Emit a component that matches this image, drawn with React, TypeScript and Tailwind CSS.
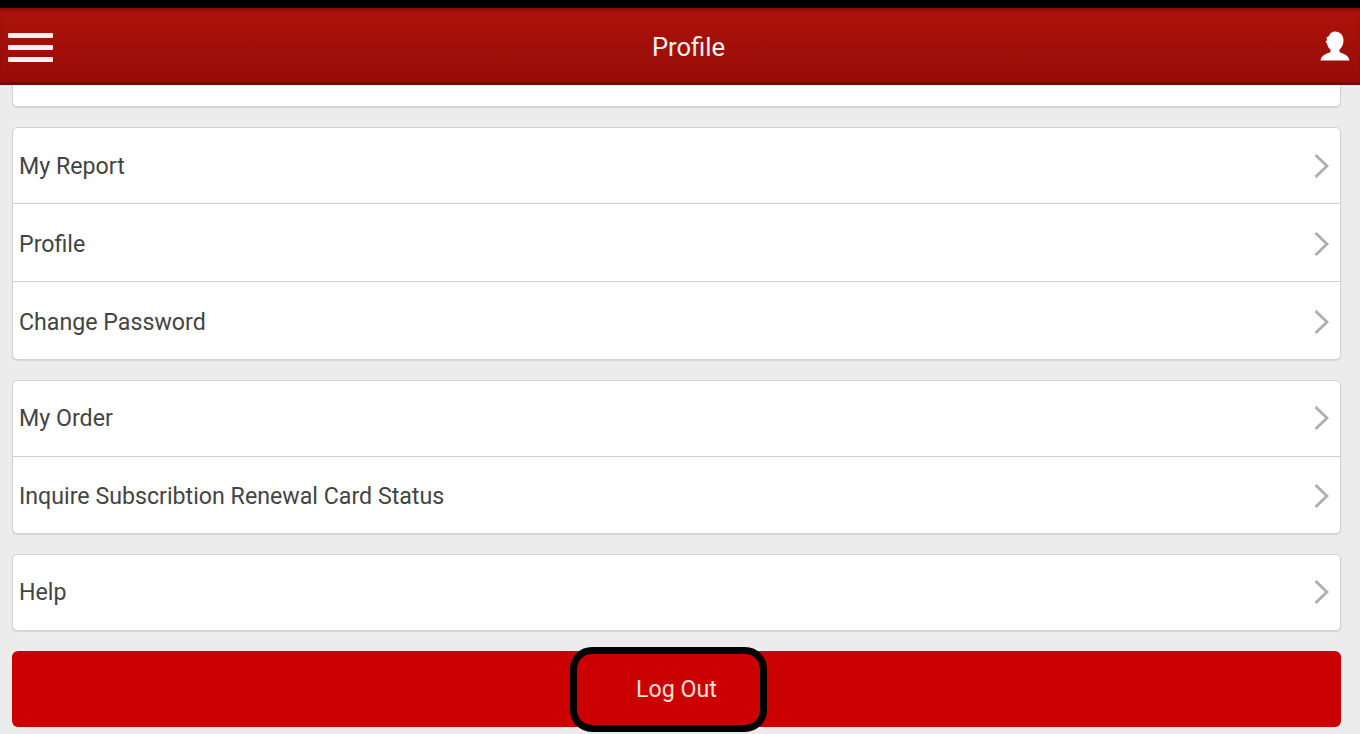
import React from 'react';

const groups = [
  [
    { label: 'My Report', height: 'h-[76px] pt-[2px]' },
    { label: 'Profile', height: 'h-[78px] pt-[4px]' },
    { label: 'Change Password', height: 'h-[77px] pt-[4px]' },
  ],
  [
    { label: 'My Order', height: 'h-[76px]' },
    { label: 'Inquire Subscribtion Renewal Card Status', height: 'h-[76px] pt-[3px]' },
  ],
  [{ label: 'Help', height: 'h-[75px]' }],
];

const Chevron = () => (
  <svg className="w-[15px] h-[24px] -mt-[2px] shrink-0" viewBox="0 0 15 24" fill="none" stroke="#adadad" strokeWidth="2.8">
    <path d="M1.5 1 L13 12 L1.5 23" />
  </svg>
);

const UserIcon = () => (
  <svg className="w-[30px] h-[30px] -mt-[4px]" viewBox="0 0 30 30" fill="#ffffff">
    <path d="M15 0.5 C20 0.5 23.5 4 23.5 9.5 C23.5 13.5 21.5 17 19.5 18.5 L19.5 21 C23 23 28.5 23.5 29.5 29.5 L0.5 29.5 C1.5 23.5 7 23 10.5 21 L10.5 18.5 C8.5 17 7.5 15 7 12.5 L5.5 11 L7 9 L6.5 6.5 L9 5 C10 2 12 0.5 15 0.5 Z" />
  </svg>
);

const App: React.FC = () => {
  return (
    <div className="w-[1360px] h-[734px] overflow-hidden flex flex-col bg-[#ececec] font-['Roboto',sans-serif]">
      <div className="h-[8px] shrink-0 bg-black" />
      <header className="h-[77px] shrink-0 flex items-center justify-between pt-[5px] pl-2 pr-[10px] bg-gradient-to-b from-[#ad130a] to-[#970c08] border-b-[3px] border-[#7d0705] shadow-[inset_0_3px_2px_#8f0e08]">
        <div className="flex flex-col gap-[7px] w-[45px]">
          <div className="h-[5px] bg-[#fff0ec] rounded-[1px]" />
          <div className="h-[5px] bg-[#fff0ec] rounded-[1px]" />
          <div className="h-[5px] bg-[#fff0ec] rounded-[1px]" />
        </div>
        <h1 className="text-[25.6px] text-[#fdf3f0] ml-[4px]">Profile</h1>
        <UserIcon />
      </header>

      <main className="flex flex-col gap-[20px] pl-3 pr-[19px]">
        <div className="h-[22px] bg-white border border-t-0 border-[#d2d2d2] rounded-b-[5px] shadow-[0_1px_1px_#d6d6d6]" />

        {groups.map((rows) => (
          <div key={rows[0].label} className="bg-white border border-[#d2d2d2] rounded-[5px] shadow-[0_1px_1px_#d6d6d6] divide-y divide-[#cfcfcf]">
            {rows.map((row) => (
              <div key={row.label} className={`${row.height} flex items-center justify-between pl-[6px] pr-[11px]`}>
                <span className="text-[23.2px] text-[#444444]">{row.label}</span>
                <Chevron />
              </div>
            ))}
          </div>
        ))}

        <button className="relative h-[76px] bg-[#cb0000] rounded-[6px] text-[23.2px] text-[#fbe0dc] flex items-center justify-center">
          Log Out
          <span className="absolute left-[558px] top-[-4px] w-[197px] h-[85px] border-[7px] border-black rounded-[22px]" />
        </button>
      </main>
    </div>
  );
};

export default App;
